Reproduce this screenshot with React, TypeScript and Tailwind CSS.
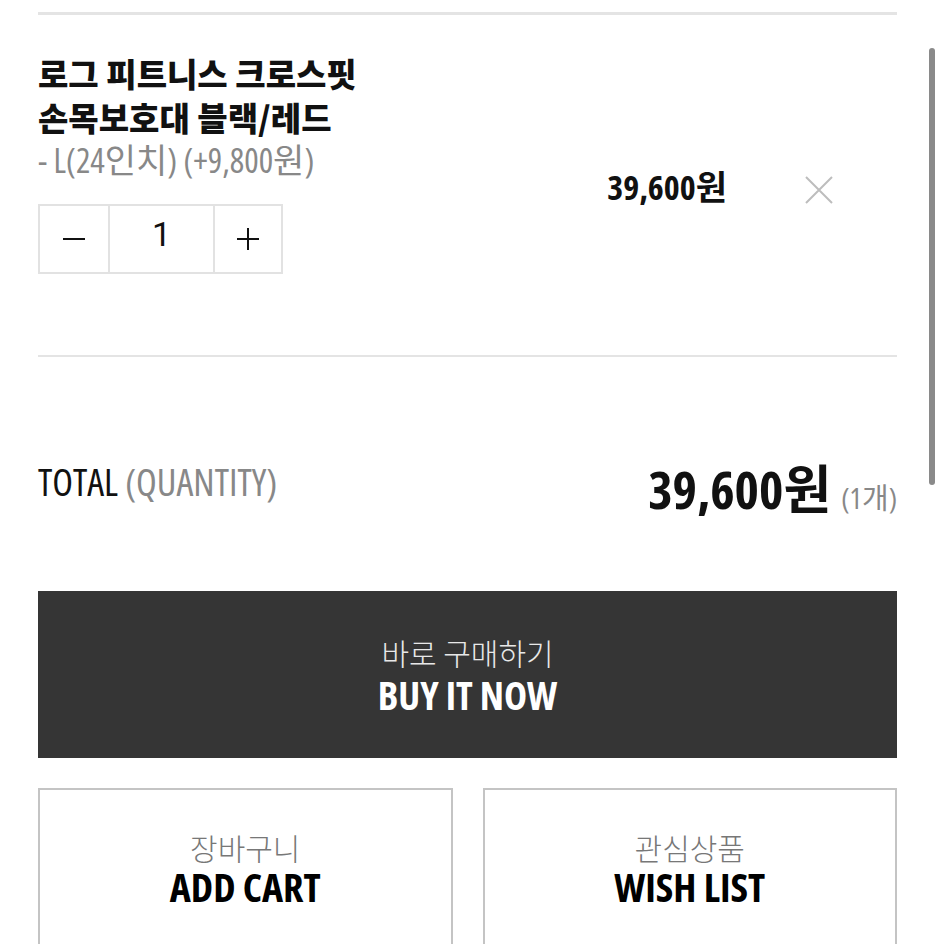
import React from "react";

const cond = "font-['Open_Sans','Noto_Sans_CJK_KR',sans-serif] font-stretch-[75%]";
const kr = "font-['Noto_Sans_CJK_KR',sans-serif]";

export default function App() {
  return (
    <div className="relative w-[944px] h-[944px] overflow-hidden bg-white">
      <div className="pl-[38px] pr-[47px] pt-[12px]">
        <div className="h-[3px] bg-[#e4e4e4]" />
        <div className="flex mt-[36px]">
          <div className="flex-1">
            <div className={`${kr} font-black text-[33px] leading-[44px] text-[#111]`}>
              로그 피트니스 크로스핏
              <br />
              손목보호대 블랙/레드
            </div>
            <div className={`${cond} text-[34px] leading-[38px] text-[#888] mt-[2px]`}>
              - L(24인치) (+9,800원)
            </div>
            <div className="flex mt-[25px] w-[245px] h-[70px] border-2 border-[#e2e2e2] text-[#111]">
              <div className="w-[70px] flex items-center justify-center border-r-2 border-[#e2e2e2]">
                <svg width="24" height="4" viewBox="0 0 24 4">
                  <path d="M1 2 H23" stroke="#111" strokeWidth="2" />
                </svg>
              </div>
              <div className="w-[105px] flex items-center justify-center border-r-2 border-[#e2e2e2] font-['Roboto',sans-serif] text-[34px] leading-[40px] pb-[10px]">1</div>
              <div className="flex-1 flex items-center justify-center">
                <svg width="24" height="24" viewBox="0 0 24 24">
                  <path d="M1 12 H23 M12 1 V23" stroke="#111" strokeWidth="2" />
                </svg>
              </div>
            </div>
          </div>
          <div className={`${cond} font-bold text-[34px] text-[#111] mt-[114px] leading-[44px] h-[44px]`}>39,600원</div>
          <div className="ml-[77px] mr-[63px] mt-[124px]">
            <svg width="30" height="30" viewBox="0 0 30 30">
              <path d="M2 2 L28 28 M28 2 L2 28" stroke="#bdbdbd" strokeWidth="2" />
            </svg>
          </div>
        </div>
        <div className="h-[2px] bg-[#e4e4e4] mt-[81px]" />
        <div className="flex items-start justify-between mt-[98px]">
          <div className={`${cond} text-[38px] leading-[52px] text-[#111]`}>
            TOTAL <span className="text-[#888]">(QUANTITY)</span>
          </div>
          <div className={`${cond} flex items-baseline mt-[2px]`}>
            <span className="font-bold text-[52px] leading-[64px] text-[#111]">39,600원</span>
            <span className="text-[29px] text-[#888] ml-[10px]">(1개)</span>
          </div>
        </div>
        <div className="mt-[70px] h-[167px] bg-[#353535] flex flex-col items-center justify-center gap-[4px]">
          <div className={`${kr} font-light text-[30px] leading-[36px] text-[#e8e8e8]`}>바로 구매하기</div>
          <div className={`${cond} font-bold text-[39px] leading-[42px] text-white`}>BUY IT NOW</div>
        </div>
        <div className="mt-[30px] grid grid-cols-2 gap-[30px]">
          <div className="h-[180px] border-2 border-[#c4c4c4] flex flex-col items-center pt-[38px]">
            <div className={`${kr} font-light text-[30px] leading-[38px] text-[#777]`}>장바구니</div>
            <div className={`${cond} font-bold text-[40px] leading-[42px] text-[#000]`}>ADD CART</div>
          </div>
          <div className="h-[180px] border-2 border-[#c4c4c4] flex flex-col items-center pt-[38px]">
            <div className={`${kr} font-light text-[30px] leading-[38px] text-[#777]`}>관심상품</div>
            <div className={`${cond} font-bold text-[40px] leading-[42px] text-[#000]`}>WISH LIST</div>
          </div>
        </div>
      </div>
      <div className="absolute left-[929px] top-[48px] w-[6px] h-[437px] rounded-full bg-[#8a8a8a]" />
    </div>
  );
}
